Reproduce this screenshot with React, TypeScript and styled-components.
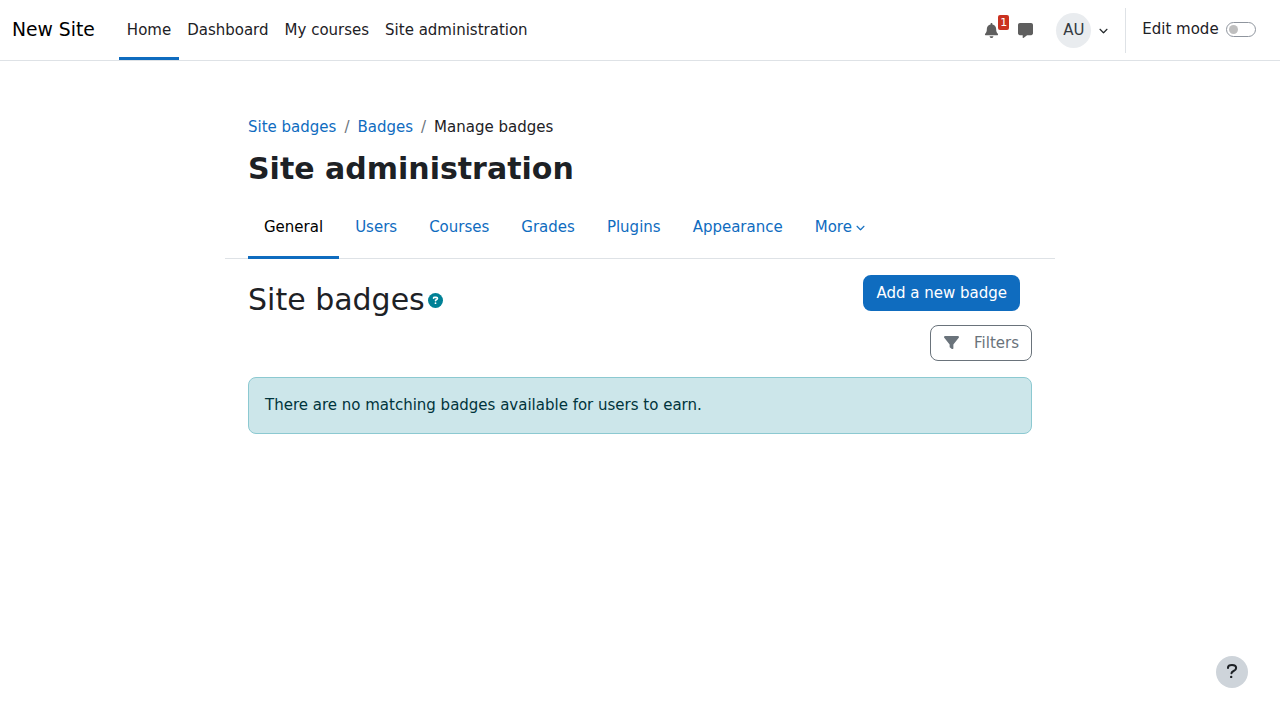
import React from "react";
import styled, { createGlobalStyle } from "styled-components";
import { FaBell, FaMessage, FaFilter, FaChevronDown } from "react-icons/fa6";

const Global = createGlobalStyle`
  *{box-sizing:border-box}
  html{height:100%}
  body{margin:0;height:100%;overflow:hidden;background:#fff;color:#1d2125;font:400 15px/22.5px "DejaVu Sans",sans-serif}
  #root{height:100%}
  a{text-decoration:none;color:inherit}
  svg{display:block}
`;

const Navbar = styled.nav`
  display:flex;align-items:stretch;height:61px;padding:0 16px 0 12px;border-bottom:1px solid #dee2e6;background:#fff;
`;
const Brand = styled.a`
  align-self:center;margin-right:24px;font-size:18.75px;line-height:28px;color:#000;white-space:nowrap;
`;
const Links = styled.div`display:flex;flex:1;`;
const NavLink = styled.a<{ $active?: boolean }>`
  display:flex;align-items:center;padding:3px 8px 0;border-bottom:3px solid ${p => (p.$active ? "#0f6cbf" : "transparent")};white-space:nowrap;
`;
const UserTools = styled.div`display:flex;align-items:center;`;
const IconButton = styled.button`
  position:relative;display:flex;align-items:center;justify-content:center;width:34px;height:60px;padding:0;border:0;background:none;color:#5e5e5e;
`;
const Count = styled.span`
  position:absolute;left:24px;top:15px;width:11px;height:15px;border-radius:2px;background:#ca3120;color:#fff;
  font:11px/15px "DejaVu Sans",sans-serif;text-align:center;
`;
const UserMenu = styled.div`display:flex;align-items:center;gap:8px;margin-left:14px;`;
const Avatar = styled.span`
  display:flex;align-items:center;justify-content:center;width:35px;height:35px;border-radius:50%;background:#e9ecef;color:#343a40;
`;
const EditMode = styled.div`
  display:flex;align-items:center;gap:7.4px;height:45px;margin-left:17px;padding:0 8px 1px 16px;border-left:1px solid #dee2e6;
`;
const Switch = styled.span`
  display:flex;align-items:center;width:30px;height:15px;padding:0 1.6px;border:1px solid #8f959e;border-radius:8px;background:#fff;
  &::before{content:"";width:9.6px;height:9.6px;border-radius:50%;background:#bfbfbf}
`;
const Page = styled.main`width:830px;margin:0 auto;padding-top:55px;`;
const Crumbs = styled.div`display:flex;gap:8px;padding:0 23px;`;
const Crumb = styled.a`color:#0f6cbf;`;
const Slash = styled.span`color:#6a737b;`;
const Title = styled.h1`margin:12px 23px 0;font-size:30px;line-height:36px;font-weight:700;`;
const Tabs = styled.div`display:flex;height:64px;margin-top:8px;padding:0 23px;border-bottom:1px solid #dee2e6;`;
const Tab = styled.a<{ $active?: boolean }>`
  display:flex;align-items:center;gap:4.4px;height:64px;padding:4px 16px 0;
  color:${p => (p.$active ? "#000" : "#0f6cbf")};border-bottom:3px solid ${p => (p.$active ? "#0f6cbf" : "transparent")};
`;
const Content = styled.section`padding:16px 23px 0;`;
const HeaderRow = styled.div`display:flex;justify-content:space-between;height:50px;padding-right:12px;`;
const Heading = styled.h2`
  display:flex;align-items:center;gap:3px;margin:7px 0 0;height:36px;font-size:30px;line-height:36px;font-weight:400;
  svg{color:#008196;margin-top:1px}
`;
const PrimaryButton = styled.button`
  height:36px;padding:1px 13px 0;border:0;border-radius:8px;background:#0f6cbf;color:#fff;font:inherit;
`;
const FilterRow = styled.div`display:flex;justify-content:flex-end;`;
const FilterButton = styled.button`
  display:flex;align-items:center;gap:15px;height:36px;padding:1px 12px 0 13px;border:1px solid #6a737b;border-radius:8px;background:#fff;color:#6a737b;font:inherit;
  svg{margin-top:-1px}
`;
const Notice = styled.div`
  height:57px;margin-top:16px;padding:16px;border:1px solid #8cc9d1;border-radius:8px;background:#cce6ea;color:#00343c;
`;
const HelpButton = styled.button`
  position:fixed;right:32px;bottom:32px;display:flex;align-items:center;justify-content:center;width:32px;height:32px;padding:0 0 2px;
  border:0;border-radius:50%;background:#ced4da;color:#1d2125;
`;

const QuestionMark = () => (
  <svg width="12" height="16" viewBox="0 0 12 16" fill="none" stroke="currentColor" strokeWidth="2.1">
    <path d="M2 5C2 2.9 3.4 2 6 2S10.1 3 10.1 4.9C10.1 6.8 8.9 7.4 7.6 8C6.3 8.6 5.5 9.2 5.5 10.3" strokeLinecap="round" strokeLinejoin="round" />
    <circle cx="5.2" cy="13.9" r="1.2" fill="currentColor" stroke="none" />
  </svg>
);

const HelpDisc = () => (
  <svg width="15" height="15" viewBox="0 0 15 15" fill="none">
    <circle cx="7.5" cy="7.5" r="7.5" fill="currentColor" />
    <path d="M5.5 5.1Q5.6 4.4 6.8 4.4H8.1Q9.5 4.5 9.5 5.6Q9.5 6.5 7.6 7.3V7.8" stroke="#fff" strokeWidth="1.6" strokeLinecap="round" strokeLinejoin="round" />
    <circle cx="7.5" cy="10.2" r="0.9" fill="#fff" />
  </svg>
);

const tabs = ["General", "Users", "Courses", "Grades", "Plugins", "Appearance"];

export default function App() {
  return (
    <>
      <Global />
      <Navbar>
        <Brand>New Site</Brand>
        <Links>
          {["Home", "Dashboard", "My courses", "Site administration"].map((t, i) => (
            <NavLink key={t} $active={i === 0}>{t}</NavLink>
          ))}
        </Links>
        <UserTools>
          <IconButton aria-label="Notifications"><FaBell size={15} /><Count>1</Count></IconButton>
          <IconButton aria-label="Messages"><FaMessage size={15} /></IconButton>
          <UserMenu><Avatar>AU</Avatar><FaChevronDown size={9} strokeWidth={10} stroke="currentColor" /></UserMenu>
          <EditMode>Edit mode<Switch /></EditMode>
        </UserTools>
      </Navbar>
      <Page>
        <Crumbs><Crumb>Site badges</Crumb><Slash>/</Slash><Crumb>Badges</Crumb><Slash>/</Slash><span>Manage badges</span></Crumbs>
        <Title>Site administration</Title>
        <Tabs>
          {tabs.map((t, i) => <Tab key={t} $active={i === 0}>{t}</Tab>)}
          <Tab>More<FaChevronDown size={9} strokeWidth={10} stroke="currentColor" /></Tab>
        </Tabs>
        <Content>
          <HeaderRow>
            <Heading>Site badges<HelpDisc /></Heading>
            <PrimaryButton>Add a new badge</PrimaryButton>
          </HeaderRow>
          <FilterRow><FilterButton><FaFilter size={15} />Filters</FilterButton></FilterRow>
          <Notice>There are no matching badges available for users to earn.</Notice>
        </Content>
      </Page>
      <HelpButton aria-label="Help"><QuestionMark /></HelpButton>
    </>
  );
}
